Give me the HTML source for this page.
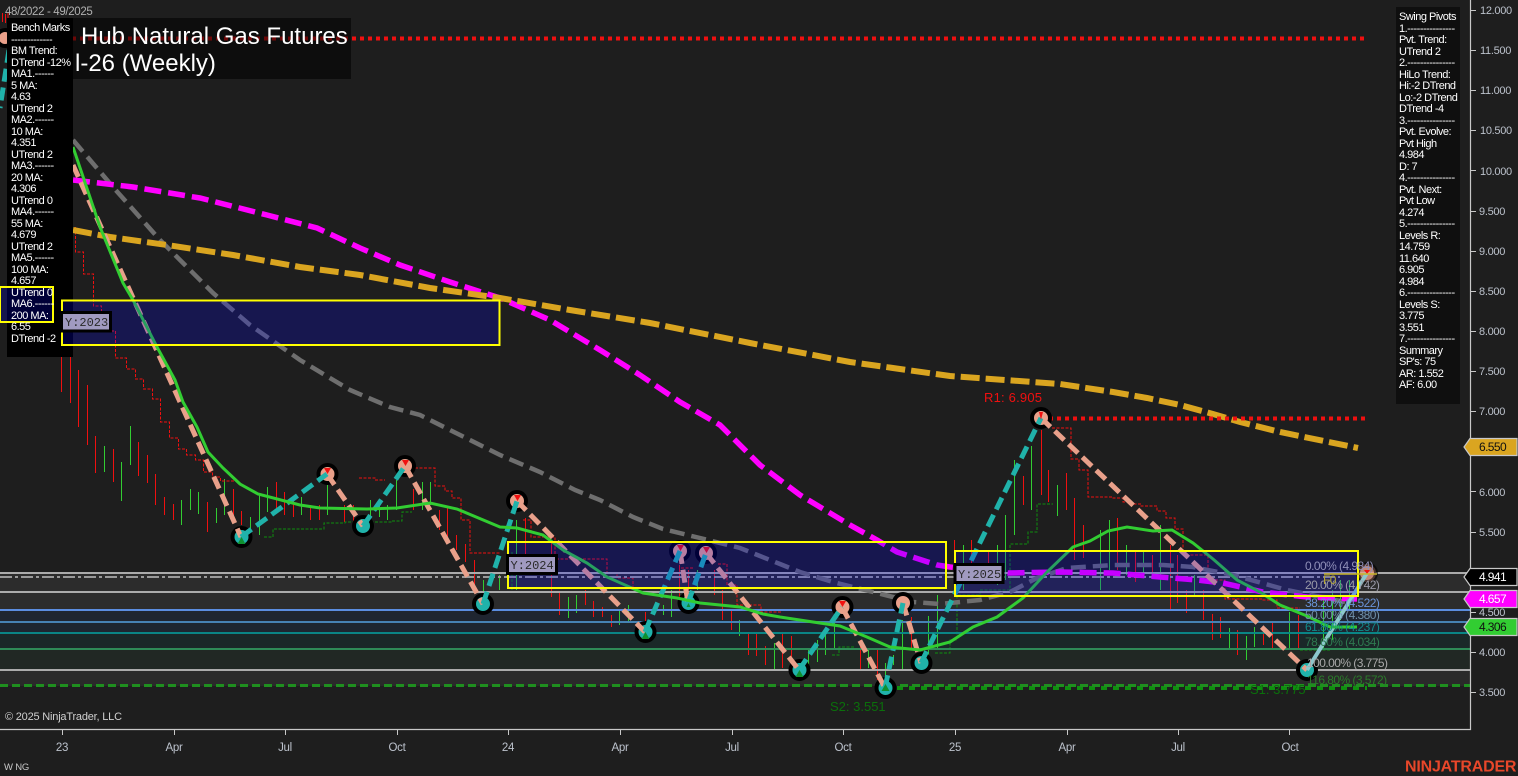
<!DOCTYPE html>
<html><head><meta charset="utf-8"><style>
html,body{margin:0;padding:0;background:#1e1e1e;width:1518px;height:776px;overflow:hidden}
svg{position:absolute;left:0;top:0}
text{font-family:"Liberation Sans",sans-serif}
.p{position:absolute;font:11px/11.5px "Liberation Sans",sans-serif;letter-spacing:-.5px;color:#fff;white-space:pre}
</style></head><body>
<svg width="1518" height="776" viewBox="0 0 1518 776">
<rect width="1518" height="776" fill="#1e1e1e"/>
<!-- fib bands -->
<rect x="0" y="573" width="1470" height="37" fill="#2c2c2c"/>
<rect x="0" y="610" width="1470" height="12" fill="#1f2530"/>
<rect x="0" y="622" width="1470" height="11" fill="#1d2630"/>
<rect x="0" y="633" width="1470" height="16" fill="#1a2828"/>
<rect x="0" y="649" width="1470" height="21" fill="#212824"/>
<rect x="0" y="670" width="1470" height="16" fill="#2a2a2a"/>
<!-- candles -->
<path fill="none" stroke="#f01010" stroke-width="1" d="M61.500 357V392M70.500 357V403M78.500 370V427M87.500 385V445M95.500 436V473M113.500 449V482M138.500 442V476M147.500 455V483M155.500 474V505M164.500 497V515M173.500 504V520M207.500 502V532M233.500 489V520M241.500 511V525M276.500 482V512M284.500 492V515M293.500 500V517M310.500 505V520M319.500 505V520M344.500 505V522M353.500 505V525M413.500 489V510M439.500 510V530M447.500 507V537M456.500 535V550M465.500 544V562M474.500 560V590M525.500 518V555M551.500 540V597M559.500 593V615M585.500 590V605M593.500 601V617M602.500 607V617M611.500 615V627M645.500 612V628M679.500 565V597M688.500 570V590M714.500 570V595M722.500 590V620M731.500 610V630M748.500 634V655M756.500 634V656M765.500 646V665M782.500 634V668M791.500 636V665M860.500 640V670M877.500 650V680M911.500 617V650M954.500 540V590M971.500 540V575M988.500 552V580M1023.500 476V505M1041.500 430V495M1048.500 470V502M1066.500 473V510M1074.500 498V560M1083.500 525V558M1117.500 518V570M1135.500 550V582M1152.500 555V575M1170.500 545V610M1177.500 555V603M1186.500 590V613M1203.500 590V620M1212.500 614V640M1220.500 617V638M1237.500 630V655M1263.500 630V645M1272.500 622V650M1298.500 615V650"/>
<path fill="none" stroke="#32cd32" stroke-width="1" d="M104.500 446V472M121.500 462V501M130.500 426V465M181.500 500V525M190.500 489V510M198.500 492V514M216.500 508V523M224.500 479V515M250.500 517V535M259.500 495V535M267.500 487V512M301.500 497V515M327.500 485V515M370.500 500V520M379.500 505V517M387.500 505V520M396.500 480V510M422.500 482V510M430.500 482V505M483.500 580V595M499.500 575V590M516.500 520V590M568.500 597V618M576.500 595V613M619.500 610V625M628.500 605V622M663.500 605V615M671.500 590V617M697.500 570V590M739.500 620V636M774.500 643V670M808.500 648V665M817.500 640V662M825.500 632V655M834.500 615V650M868.500 650V668M885.500 663V680M893.500 655V665M902.500 620V670M928.500 616V655M937.500 595V650M963.500 545V590M997.500 545V585M1005.500 515V580M1014.500 460V535M1031.500 446V510M1057.500 485V516M1100.500 530V590M1109.500 520V570M1126.500 545V575M1143.500 550V575M1160.500 525V590M1194.500 575V595M1229.500 628V650M1246.500 636V660M1254.500 627V647M1289.500 612V648M1323.500 600V650M1332.500 590V640M1340.500 580V620M1349.500 580V610"/>
<!-- step lines -->
<path fill="none" stroke="#f01010" stroke-width="1" stroke-dasharray="3 1.500" d="M75.500 227V252H83.500V274H93.500V306H101.500V331H115.500V358H126.500V369H135.500V379H143.500V389H152.500V399H160.500V422H169.500V438H178.500V449H186.500V455H195.500V460H203.500V472H212.500V477H220.500V481H238M359 478H375V480H385M415 468H435V486H445V491H452V498H461V520H470V553H500M523 520H531V537H555V559H607V573H617V578H633V590M681 568H693M718 564H727V585H737V605H761V612H782M1052 428H1071V459H1079V470H1088V497H1113V498H1123V502H1131V504H1141V506H1157V511H1166V518H1175V529H1183V555H1208V580H1225V599H1262V600H1277V608H1300"/>
<path fill="none" stroke="#0f8f0f" stroke-width="1" stroke-dasharray="3 1.500" d="M264 537H273V529H324V523H345V522H392V521H402V512H412M512 552V590M832 655H839V647H855M935 653H950V640H957V595H980V590H1010V544H1028V532H1037V504H1053M1300 650H1330"/>
<!-- fib lines -->
<path fill="none" stroke="#ababab" stroke-width="2" d="M0 573H1470M0 592H1470M0 670H1470"/>
<path fill="none" stroke="#9a9a9a" stroke-width="2" stroke-dasharray="12 3 3 3" d="M0 577H1340"/>
<path fill="none" stroke="#5b8de0" stroke-width="2" d="M0 610H1470"/>
<path fill="none" stroke="#4682b4" stroke-width="2" d="M0 622H1470"/>
<path fill="none" stroke="#0a8585" stroke-width="2" d="M0 633H1470"/>
<path fill="none" stroke="#2e8b57" stroke-width="2" d="M0 649H1470"/>
<path fill="none" stroke="#0f8f0f" stroke-width="4" stroke-dasharray="6 6" d="M885 688H1367"/>
<path fill="none" stroke="#1f8f1f" stroke-width="3" stroke-dasharray="8 4" d="M0 685.500H1470"/>
<!-- MAs -->
<path fill="none" stroke="#6e6e6e" stroke-width="4.500" stroke-dasharray="15 7" d="M73 140L113 187L160 240L213 293L250 325L300 360L350 390L390 407L420 415L470 440L500 455L540 472L575 490L600 500L633 517L663 529L700 538L740 548L780 564L800 572L833 582L873 592L913 602L940 604L980 600L1010 592L1037 578L1067 568L1113 565L1163 565L1193 567L1233 575L1287 590L1345 602"/>
<path fill="none" stroke="#ff00ff" stroke-width="5.500" stroke-dasharray="17 7" d="M73 180L133 187L200 198L267 215L317 228L360 248L400 265L450 282L500 298L550 320L600 350L640 375L680 402L720 425L760 465L800 495L850 525L877 540L897 552L937 565L950 567L1008 573L1060 572L1113 573L1160 577L1197 580L1223 583L1263 592L1307 597L1357 599"/>
<path fill="none" stroke="#daa520" stroke-width="6" stroke-dasharray="19 6" d="M73 230L110 237L167 245L233 255L300 267L360 275L430 288L500 298L570 310L650 323L750 343L850 362L950 376L1060 384L1113 392L1147 398L1180 405L1213 414L1240 422L1280 432L1358 448"/>
<!-- levels -->
<path fill="none" stroke="#f01010" stroke-width="4" stroke-dasharray="4 4" d="M0 38.500H1367"/>
<path fill="none" stroke="#f01010" stroke-width="4" stroke-dasharray="4 4" d="M1041 418.500H1367"/>
<!-- pivot markers -->
<g stroke="#000" stroke-width="4">
<g fill="#20b2aa"><circle cx="241.500" cy="537" r="9"/><circle cx="363" cy="526" r="9"/><circle cx="483" cy="604" r="9"/><circle cx="645.500" cy="632" r="9"/><circle cx="688.500" cy="603" r="9"/><circle cx="799.500" cy="670" r="9"/><circle cx="885.500" cy="688" r="9"/><circle cx="921.500" cy="663" r="9"/><circle cx="1307" cy="670" r="9"/></g>
<g fill="#e9a08a"><circle cx="327.500" cy="474" r="9"/><circle cx="405" cy="466" r="9"/><circle cx="517" cy="501" r="9"/><circle cx="680" cy="551" r="9"/><circle cx="706" cy="553" r="9"/><circle cx="842.500" cy="607" r="9"/><circle cx="903" cy="603" r="9"/><circle cx="1041" cy="418" r="9"/><circle cx="1367" cy="573" r="9" fill-opacity=".8" stroke-opacity=".6"/><circle cx="5" cy="38" r="8"/></g>
</g>
<!-- zigzag -->
<g fill="none" stroke-width="5" stroke-dasharray="13 6">
<path stroke="#e9a08a" d="M73 165L241 537M327 474L363 526M405 466L483 604M517 501L645 632M680 551L688 603M706 553L799 670M842 607L885 688M903 603L921 663M1041 418L1307 670"/>
<path stroke="#20b2aa" d="M241 537L327 474M363 526L405 466M483 604L517 501M645 632L680 551M688 603L706 553M799 670L842 607M885 688L903 603M921 663L1041 418M9 50L0 108"/>
<path stroke="#8cc8cc" stroke-dasharray="none" stroke-width="4" d="M1307 670L1367 573"/>
</g>
<g fill="#f01010"><path d="M324 468h7l-3.500 6zM402 460h7l-3.500 6zM514 495h7l-3.500 6zM677 545h7l-3.500 6zM703 547h7l-3.500 6zM839 601h7l-3.500 6zM1039 412h4l-2 8zM1364 570h6l-3 4z"/></g>
<g fill="#0f8f2f"><path d="M241.500 537l4 7h-8zM645.500 632l4 7h-8zM799.500 670l4 7h-8zM885.500 684l4 7h-8zM688.500 603l2 4h-4z"/></g>
<path fill="none" stroke="#f01010" d="M2.500 13V22M5.500 14V23M8 13V21"/>
<!-- MA20 on top of markers -->
<path fill="none" stroke="#32cd32" stroke-width="3" d="M73 147L100 227L123 283L133 300L157 347L175 380L183 402L197 427L208 452L223 468L240 484L258 494L300 505L320 508L367 509L397 508L430 503L457 509L500 527L517 528L543 535L563 550L587 563L607 577L643 593L677 598L700 603L740 607L763 614L780 617L813 622L840 626L867 637L890 647L920 650L950 642L973 627L997 617L1023 598L1047 572L1073 547L1090 541L1108 531L1127 527L1153 531L1172 530L1193 543L1213 559L1237 580L1260 592L1280 605L1307 616L1330 627L1357 627"/>
<!-- title panel -->
<rect x="60" y="18" width="291" height="61" fill="#000" fill-opacity=".55"/>
<text x="81" y="44" font-size="24" fill="#fff">Hub Natural Gas Futures</text>
<text x="75" y="71" font-size="24" fill="#fff">l-26 (Weekly)</text>
<!-- panels -->
<rect x="7" y="18" width="66" height="339" fill="#000"/>
<rect x="1396" y="7" width="64" height="397" fill="#0f0f0f"/>
<!-- year boxes -->
<rect x="0" y="287" width="53" height="35" fill="#0000ff" fill-opacity=".22" stroke="#ffff00" stroke-width="2"/>
<rect x="62" y="300.500" width="437.500" height="44.500" fill="#0000ff" fill-opacity=".22" stroke="#ffff00" stroke-width="2"/>
<rect x="508" y="542" width="438" height="46" fill="#0000ff" fill-opacity=".22" stroke="#ffff00" stroke-width="2"/>
<rect x="955" y="551" width="403" height="45" fill="#0000ff" fill-opacity=".22" stroke="#ffff00" stroke-width="2"/>
<g fill="#a09ac0" stroke="#000" stroke-width="3">
<rect x="61.500" y="312.500" width="49" height="18.500"/><rect x="507.500" y="555.500" width="49" height="18"/><rect x="955" y="564.500" width="48" height="18"/></g>
<g font-size="12" fill="#2a2a2a">
<text x="65" y="326" style="font-family:'Liberation Mono',monospace">Y:2023</text>
<text x="510.500" y="569" style="font-family:'Liberation Mono',monospace">Y:2024</text>
<text x="958" y="578" style="font-family:'Liberation Mono',monospace">Y:2025</text></g>
<!-- fib labels -->
<g font-size="12" letter-spacing="-.55">
<text x="1305" y="570" fill="#8f8fb8">0.00% (4.984)</text>
<text x="1305" y="589" fill="#9a9aa8">20.00% (4.742)</text>
<text x="1305" y="607" fill="#6a93d8">38.20% (4.522)</text>
<text x="1305" y="619" fill="#6f8fa8">50.00% (4.380)</text>
<text x="1305" y="631" fill="#128a8a">61.80% (4.237)</text>
<text x="1305" y="646" fill="#2e7a50">78.60% (4.034)</text>
<text x="1307" y="667" fill="#a8a8a8">100.00% (3.775)</text>
<text x="1307" y="684" fill="#2a7a2a">116.80% (3.572)</text>
<text x="1323" y="584" fill="#b3a532">F0</text>
</g>
<g font-size="13">
<text x="1250" y="694" fill="#0b6f0b">S1: 3.775</text>
<text x="984" y="402" fill="#f01010" letter-spacing=".2">R1: 6.905</text>
<text x="830" y="711" fill="#0b6f0b">S2: 3.551</text>
</g>
<path stroke="#c8b428" stroke-width="1.500" d="M1324 574H1377"/>
<!-- axes -->
<path fill="none" stroke="#c8c8c8" stroke-width="1.200" d="M1470.500 0V729.500H0"/>
<path fill="none" stroke="#c8c8c8" d="M1470 10.500h6M1470 50.500h6M1470 90.500h6M1470 130.500h6M1470 170.500h6M1470 211.500h6M1470 251.500h6M1470 291.500h6M1470 331.500h6M1470 371.500h6M1470 411.500h6M1470 451.500h6M1470 491.500h6M1470 532.500h6M1470 572.500h6M1470 612.500h6M1470 652.500h6M1470 692.500h6M62.500 729v6M174.500 729v6M285.500 729v6M397.500 729v6M508.500 729v6M620.500 729v6M732.500 729v6M843.500 729v6M955.500 729v6M1067.500 729v6M1178.500 729v6M1289.500 729v6"/>
<g font-size="11" letter-spacing="-.3" fill="#bcc2cc">
<text x="1480" y="14">12.000</text><text x="1480" y="54">11.500</text><text x="1480" y="94">11.000</text><text x="1480" y="134">10.500</text><text x="1480" y="175">10.000</text>
<text x="1479" y="215">9.500</text><text x="1479" y="255">9.000</text><text x="1479" y="295">8.500</text><text x="1479" y="335">8.000</text><text x="1479" y="375">7.500</text><text x="1479" y="415">7.000</text><text x="1479" y="496">6.000</text><text x="1479" y="536">5.500</text><text x="1479" y="616">4.500</text><text x="1479" y="656">4.000</text><text x="1479" y="696">3.500</text>
</g>
<g font-size="11.500" letter-spacing="-.3" fill="#bcc2cc" text-anchor="middle">
<text x="62" y="751">23</text><text x="174" y="751">Apr</text><text x="285" y="751">Jul</text><text x="397" y="751">Oct</text><text x="508" y="751">24</text><text x="620" y="751">Apr</text><text x="732" y="751">Jul</text><text x="843" y="751">Oct</text><text x="955" y="751">25</text><text x="1067" y="751">Apr</text><text x="1178" y="751">Jul</text><text x="1290" y="751">Oct</text>
</g>
<!-- price tags -->
<g stroke="#c8c8c8" stroke-width="1.200">
<path d="M1464 447l6-8.500h47v17h-47z" fill="#daa520"/>
<path d="M1464 577l6-8.500h47v17h-47z" fill="#000"/>
<path d="M1464 599l6-8.500h47v17h-47z" fill="#ff00ff"/>
<path d="M1464 627l6-8.500h47v17h-47z" fill="#32cd32"/>
</g>
<g font-size="12" letter-spacing="-.6">
<text x="1479" y="451" fill="#111">6.550</text>
<text x="1479" y="581" fill="#fff">4.941</text>
<text x="1479" y="603" fill="#fff">4.657</text>
<text x="1479" y="631" fill="#111">4.306</text>
</g>
<!-- misc -->
<text x="5" y="15" font-size="11.500" letter-spacing="-.35" fill="#b0b0b0">48/2022 - 49/2025</text>
<text x="5" y="720" font-size="11" letter-spacing="-.2" fill="#d0d0d0">© 2025 NinjaTrader, LLC</text>
<text x="4" y="770" font-size="9.500" letter-spacing="-.2" fill="#c8c8c8">W NG</text>
<text x="1405" y="771.500" font-size="16" font-weight="bold" fill="#e8472a" letter-spacing="-.2">NINJATRADER</text>
</svg>
<div class="p" style="left:11px;top:23px">Bench Marks
-------------
BM Trend:
DTrend -12%
MA1.------
5 MA:
4.63
UTrend 2
MA2.------
10 MA:
4.351
UTrend 2
MA3.------
20 MA:
4.306
UTrend 0
MA4.------
55 MA:
4.679
UTrend 2
MA5.------
100 MA:
4.657
UTrend 0
MA6.------
200 MA:
6.55
DTrend -2</div>
<div class="p" style="left:1399px;top:12px">Swing Pivots
1.---------------
Pvt. Trend:
UTrend 2
2.---------------
HiLo Trend:
Hi:-2 DTrend
Lo:-2 DTrend
DTrend -4
3.---------------
Pvt. Evolve:
Pvt High
4.984
D: 7
4.---------------
Pvt. Next:
Pvt Low
4.274
5.---------------
Levels R:
14.759
11.640
6.905
4.984
6.---------------
Levels S:
3.775
3.551
7.---------------
Summary
SP's: 75
AR: 1.552
AF: 6.00</div>
</body></html>
